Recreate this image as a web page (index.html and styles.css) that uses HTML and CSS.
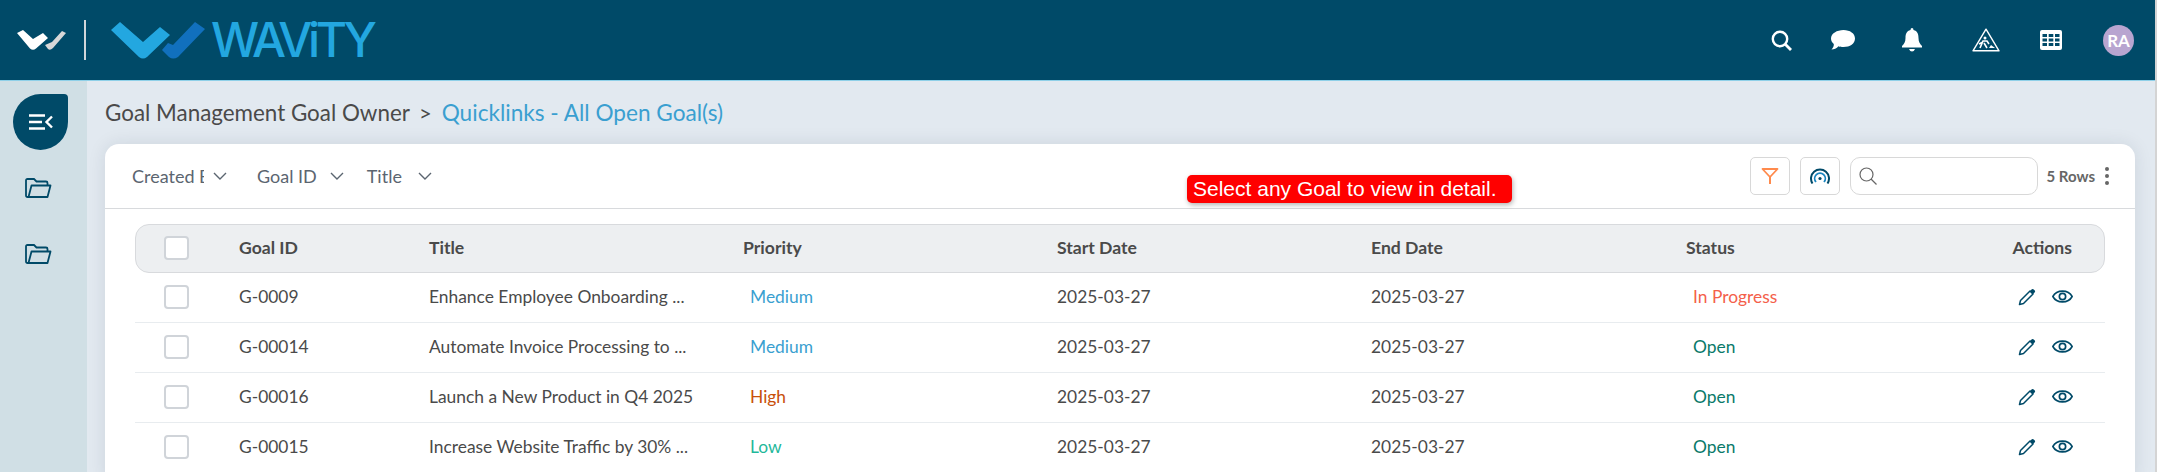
FILE: index.html
```html
<!DOCTYPE html>
<html>

<head>
    <title>Wavity - Goals</title>
    <link rel="stylesheet" href="styles.css">
</head>

<body>
    <svg class="sprite">
        <symbol id="pencil" viewBox="0 0 18 18">
            <path d="M1.5 16.5 L2.5 12.5 L12 3 L15 6 L5.5 15.5 Z" fill="none" stroke="#004a68" stroke-width="1.5" stroke-linejoin="round" />
            <path d="M11.8 3.2 L13.8 1.2 Q14.6 .6 15.4 1.2 L16.8 2.6 Q17.4 3.4 16.8 4.2 L14.8 6.2 Z" fill="#004a68" />
        </symbol>
        <symbol id="eye" viewBox="0 0 20 14">
            <path d="M.8 7 C4.5 .2 15.5 .2 19.2 7 C15.5 13.8 4.5 13.8 .8 7 Z" fill="none" stroke="#004a68" stroke-width="1.5" />
            <circle cx="10" cy="7" r="3" fill="none" stroke="#004a68" stroke-width="1.6" />
        </symbol>
        <symbol id="folder" viewBox="0 0 27 20">
            <path d="M4 19 H2.5 Q1 19 1 17.5 V2.5 Q1 1 2.5 1 H9 L11.5 3.5 H21 Q22.5 3.5 22.5 5 V7" fill="none" stroke="#004a68" stroke-width="1.8" />
            <path d="M6.5 7.5 H25.5 L22.5 19 H3.5 Z" fill="none" stroke="#004a68" stroke-width="1.8" stroke-linejoin="round" />
        </symbol>
        <symbol id="chevron" viewBox="0 0 14 8">
            <path d="M1 1 L7 7 L13 1" fill="none" stroke="#5b6570" stroke-width="1.4" />
        </symbol>
    </svg>

    <div class="app">
        <header class="topbar">
            <svg class="logo-small" viewBox="0 0 50 20">
                <path d="M0 3 L6 0 L16 9 L26 3 L31 8 L19 18.5 Q16 21 13 18.5 Z" fill="#fff" />
                <path d="M28 15 L35 12 L45 1 L49 3 L36 18 Q33 21 31 19 Z" fill="#d8d8d8" />
            </svg>
            <div class="logo-divider"></div>
            <svg class="logo-big" viewBox="0 0 94 37">
                <path d="M0 8 L9 0 L32 20 L49 5 L59 13 L36 35 Q32 38 28 35 Z" fill="#23a7e0" />
                <path d="M51 28 L57 21 L62 23 L84 0 L94 7 L67 35 Q62 38 58 35 Z" fill="#1170bd" />
            </svg>
            <span class="wordmark">WAViTY</span>

            <div class="topbar-icons">
                <svg class="ti ti-search" viewBox="0 0 21 21">
                    <circle cx="9" cy="9" r="7.2" fill="none" stroke="#fff" stroke-width="2.4" />
                    <path d="M14 14 L20 20" stroke="#fff" stroke-width="2.8" />
                </svg>
                <svg class="ti ti-chat" viewBox="0 0 24 20">
                    <path d="M12.5 0 C19 0 24 3.5 24 8.5 C24 13.5 19 17 12.5 17 C10.5 17 9 16.8 7.5 16.2 C5.5 18.5 3 19.5 .5 19.5 C2 18 3 16 2.8 14 C1 12.5 0 10.5 0 8.5 C0 3.5 6 0 12.5 0 Z" fill="#fff" />
                </svg>
                <svg class="ti ti-bell" viewBox="0 0 20 24">
                    <path d="M10 0 Q11.5 0 11.5 2 C15.5 3 16.5 6 16.5 10 C16.5 14 18 16 20 18 V19.5 H0 V18 C2 16 3.5 14 3.5 10 C3.5 6 4.5 3 8.5 2 Q8.5 0 10 0 Z" fill="#fff" />
                    <path d="M7 21 H13 Q12 23.5 10 23.5 Q8 23.5 7 21 Z" fill="#fff" />
                </svg>
                <svg class="ti ti-work" viewBox="0 0 28 24">
                    <path d="M14 1.2 L27 22.8 H1 Z" fill="none" stroke="#fff" stroke-width="1.4" stroke-linejoin="round" />
                    <circle cx="13" cy="10" r="1.5" fill="#fff" />
                    <path d="M8 20 L11 13 L15 13 L17 16 M12 15 L15 20 M7 16 L11 14" fill="none" stroke="#fff" stroke-width="1.6" />
                    <path d="M17 20 L19 17 L23 20 Z" fill="#fff" />
                </svg>
                <svg class="ti ti-grid" viewBox="0 0 22 20">
                    <rect width="22" height="20" rx="2" fill="#fff" />
                    <g fill="#004a68">
                        <rect x="2.5" y="4" width="4.5" height="3" /><rect x="8.7" y="4" width="4.6" height="3" /><rect x="15" y="4" width="4.5" height="3" />
                        <rect x="2.5" y="8.5" width="4.5" height="3" /><rect x="8.7" y="8.5" width="4.6" height="3" /><rect x="15" y="8.5" width="4.5" height="3" />
                        <rect x="2.5" y="13" width="4.5" height="3" /><rect x="8.7" y="13" width="4.6" height="3" /><rect x="15" y="13" width="4.5" height="3" />
                    </g>
                </svg>
                <div class="avatar">RA</div>
            </div>
        </header>

        <div class="below">
            <aside class="sidebar">
                <div class="menu-btn">
                    <svg viewBox="0 0 24 16">
                        <path d="M0 1.5 H16 M0 8 H13 M0 14.5 H16" stroke="#fff" stroke-width="2.4" />
                        <path d="M23 2.5 L17.5 8 L23 13.5" fill="none" stroke="#fff" stroke-width="2.4" />
                    </svg>
                </div>
                <svg class="side-folder"><use href="#folder" /></svg>
                <svg class="side-folder"><use href="#folder" /></svg>
            </aside>

            <main class="content">
                <div class="crumbs">
                    <span>Goal Management Goal Owner</span>
                    <span class="crumb-sep">&gt;</span>
                    <span class="crumb-link">Quicklinks - All Open Goal(s)</span>
                </div>

                <section class="card">
                    <div class="toolbar">
                        <div class="filter filter-created">
                            <span class="filter-label">Created By</span>
                            <svg class="chev"><use href="#chevron" /></svg>
                        </div>
                        <div class="filter filter-goal">
                            <span>Goal ID</span>
                            <svg class="chev"><use href="#chevron" /></svg>
                        </div>
                        <div class="filter filter-title">
                            <span>Title</span>
                            <svg class="chev"><use href="#chevron" /></svg>
                        </div>

                        <div class="tools">
                            <div class="tool-btn">
                                <svg viewBox="0 0 18 18" width="18" height="18">
                                    <path d="M1.5 2 H16.5 L9 10 Z" fill="none" stroke="#ff8a4c" stroke-width="1.8" stroke-linejoin="round" />
                                    <path d="M9 10 V17" stroke="#ff8a4c" stroke-width="2" />
                                </svg>
                            </div>
                            <div class="tool-btn">
                                <svg viewBox="0 0 20 16" width="20" height="16">
                                    <path d="M2.5 15.5 A9 9 0 1 1 17.5 15.5" fill="none" stroke="#004a68" stroke-width="2" />
                                    <path d="M6 14 A5.3 5.3 0 1 1 14 14" fill="none" stroke="#1a86c0" stroke-width="1.8" />
                                    <circle cx="10" cy="10.5" r="1.6" fill="#004a68" />
                                </svg>
                            </div>
                            <div class="search-box">
                                <svg viewBox="0 0 18 18" width="18" height="18">
                                    <circle cx="7.5" cy="7.5" r="6.5" fill="none" stroke="#666" stroke-width="1.2" />
                                    <path d="M12 12 L17.5 17.5" stroke="#666" stroke-width="1.2" />
                                </svg>
                            </div>
                            <span class="rows-count">5 Rows</span>
                            <div class="dots"><i></i><i></i><i></i></div>
                        </div>
                    </div>

                    <div class="toast">Select any Goal to view in detail.</div>

                    <div class="table">
                        <div class="row row-head">
                            <div><span class="check"></span></div>
                            <div>Goal ID</div>
                            <div>Title</div>
                            <div>Priority</div>
                            <div>Start Date</div>
                            <div>End Date</div>
                            <div>Status</div>
                            <div class="cell-actions">Actions</div>
                        </div>

                        <div class="row">
                            <div><span class="check"></span></div>
                            <div>G-0009</div>
                            <div>Enhance Employee Onboarding ...</div>
                            <div class="tag medium">Medium</div>
                            <div>2025-03-27</div>
                            <div>2025-03-27</div>
                            <div class="tag progress">In Progress</div>
                            <div class="cell-actions"><svg class="act-edit"><use href="#pencil" /></svg><svg class="act-view"><use href="#eye" /></svg></div>
                        </div>

                        <div class="row">
                            <div><span class="check"></span></div>
                            <div>G-00014</div>
                            <div>Automate Invoice Processing to ...</div>
                            <div class="tag medium">Medium</div>
                            <div>2025-03-27</div>
                            <div>2025-03-27</div>
                            <div class="tag open">Open</div>
                            <div class="cell-actions"><svg class="act-edit"><use href="#pencil" /></svg><svg class="act-view"><use href="#eye" /></svg></div>
                        </div>

                        <div class="row">
                            <div><span class="check"></span></div>
                            <div>G-00016</div>
                            <div>Launch a New Product in Q4 2025</div>
                            <div class="tag high">High</div>
                            <div>2025-03-27</div>
                            <div>2025-03-27</div>
                            <div class="tag open">Open</div>
                            <div class="cell-actions"><svg class="act-edit"><use href="#pencil" /></svg><svg class="act-view"><use href="#eye" /></svg></div>
                        </div>

                        <div class="row">
                            <div><span class="check"></span></div>
                            <div>G-00015</div>
                            <div>Increase Website Traffic by 30% ...</div>
                            <div class="tag low">Low</div>
                            <div>2025-03-27</div>
                            <div>2025-03-27</div>
                            <div class="tag open">Open</div>
                            <div class="cell-actions"><svg class="act-edit"><use href="#pencil" /></svg><svg class="act-view"><use href="#eye" /></svg></div>
                        </div>
                    </div>
                </section>
            </main>
        </div>
    </div>
</body>

</html>
```

FILE: styles.css
```css
* {
    box-sizing: border-box;
}

html,
body {
    margin: 0;
    height: 472px;
    overflow: hidden;
}

body {
    display: flex;
    flex-direction: column;
    background: #d4d4d4;
    font-family: Lato, "Liberation Sans", sans-serif;
    color: #4a4a4a;
}

.sprite {
    display: none;
}

.app {
    width: 2155px;
    height: 472px;
    display: flex;
    flex-direction: column;
    overflow: hidden;
}

/* top bar */
.topbar {
    flex: 0 0 81px;
    display: flex;
    align-items: center;
    background: #004a68;
    border-bottom: 1px solid #8fd0e8;
}

.logo-small {
    width: 50px;
    height: 20px;
    margin: 0 0 0 17px;
}

.logo-divider {
    width: 2px;
    height: 40px;
    margin-left: 17px;
    background: #d0d6da;
}

.logo-big {
    width: 94px;
    height: 37px;
    margin-left: 25px;
}

.wordmark {
    margin-left: 6px;
    font-family: Inter, sans-serif;
    font-size: 48px;
    font-weight: 500;
    line-height: 48px;
    color: #23a7e0;
    letter-spacing: -4.3px;
}

.topbar-icons {
    margin-left: auto;
    display: flex;
    align-items: center;
}

.ti {
    display: block;
}

.ti-search {
    width: 21px;
    height: 21px;
}

.ti-chat {
    width: 24px;
    height: 20px;
    margin-left: 39px;
}

.ti-bell {
    width: 20px;
    height: 24px;
    margin-left: 47px;
}

.ti-work {
    width: 28px;
    height: 24px;
    margin-left: 50px;
}

.ti-grid {
    width: 22px;
    height: 20px;
    margin-left: 40px;
}

.avatar {
    width: 31px;
    height: 31px;
    margin: 0 21px 0 41px;
    border-radius: 50%;
    background: #b8a5d0;
    color: #fff;
    font-size: 17px;
    font-weight: 700;
    line-height: 31px;
    text-align: center;
}

/* sidebar and content */
.below {
    flex: 1;
    display: flex;
    min-height: 0;
}

.sidebar {
    flex: 0 0 87px;
    display: flex;
    flex-direction: column;
    align-items: flex-start;
    padding: 13px 0 0 13px;
    background: #d0dfe5;
}

.menu-btn {
    width: 55px;
    height: 56px;
    display: flex;
    align-items: center;
    justify-content: center;
    background: #004a68;
    border-radius: 50% 4px 50% 50%;
}

.menu-btn svg {
    width: 24px;
    height: 16px;
}

.side-folder {
    width: 27px;
    height: 20px;
    margin-left: 12px;
    margin-top: 28px;
}

.side-folder + .side-folder {
    margin-top: 46px;
}

.content {
    flex: 1;
    min-width: 0;
    padding: 0 20px 0 18px;
    background: #e2e9f0;
}

.crumbs {
    height: 63px;
    display: flex;
    align-items: center;
    font-size: 22.4px;
    padding-bottom: 1px;
}

.crumb-sep {
    margin: 0 10px 0 9px;
    font-size: 22px;
}

.crumb-link {
    color: #3a9fd0;
    font-size: 22.6px;
}

.card {
    position: relative;
    height: 340px;
    background: #fff;
    border-radius: 14px 14px 0 0;
    box-shadow: 0 0 18px rgba(0, 40, 60, 0.1);
}

/* filters and tools */
.toolbar {
    height: 65px;
    display: flex;
    align-items: center;
    padding-left: 27px;
    border-bottom: 1px solid #d8dadd;
    font-size: 18px;
    color: #5b6570;
}

.filter {
    display: flex;
    align-items: center;
}

.filter-label {
    width: 72px;
    overflow: hidden;
    white-space: nowrap;
}

.filter-goal {
    margin-left: 30px;
}

.filter-title {
    margin-left: 23px;
}

.chev {
    width: 14px;
    height: 8px;
    margin-left: 13px;
}

.filter-created .chev {
    margin-left: 9px;
}

.filter-title .chev {
    margin-left: 16px;
}

.tools {
    margin-left: auto;
    display: flex;
    align-items: center;
    padding-right: 26px;
}

.tool-btn {
    width: 40px;
    height: 38px;
    margin-right: 10px;
    display: flex;
    align-items: center;
    justify-content: center;
    border: 1px solid #d8d8d8;
    border-radius: 5px;
}

.search-box {
    width: 188px;
    height: 38px;
    display: flex;
    align-items: center;
    padding-left: 8px;
    border: 1px solid #d8d8d8;
    border-radius: 10px;
}

.rows-count {
    margin-left: 8px;
    font-size: 15px;
    font-weight: 700;
    color: #666;
}

.dots {
    margin-left: 10px;
    display: flex;
    flex-direction: column;
    gap: 3px;
}

.dots i {
    width: 4px;
    height: 4px;
    border-radius: 50%;
    background: #666;
}

.toast {
    position: absolute;
    left: 1082px;
    top: 31px;
    width: 325px;
    height: 28px;
    padding-left: 6px;
    background: #f00;
    border-radius: 5px;
    box-shadow: 1px 2px 5px rgba(0, 0, 0, 0.3);
    color: #fff;
    font-family: "Liberation Sans", sans-serif;
    font-size: 21px;
    line-height: 27px;
}

/* table */
.table {
    margin: 15px 30px 0;
}

.row {
    height: 50px;
    display: grid;
    grid-template-columns: 75px 190px 314px 314px 314px 315px 1fr 200px;
    align-items: center;
    padding: 0 0 2px 29px;
    border-bottom: 1px solid #e8ecef;
    font-size: 17.4px;
    white-space: nowrap;
}

.row-head {
    height: 49px;
    border: 1px solid #d8dadd;
    border-radius: 14px;
    background: #edeff1;
    font-size: 17.6px;
    font-weight: 700;
    padding: 0 0 2px 28px;
}

.check {
    display: block;
    width: 25px;
    height: 24px;
    border: 2px solid #d0d4d9;
    border-radius: 4px;
    background: #fff;
}

.tag {
    padding-left: 7px;
}

.medium {
    color: #3a9fd0;
}

.high {
    color: #c8500a;
}

.low {
    color: #1fb89a;
}

.progress {
    color: #f4604a;
}

.open {
    color: #0a7a6a;
}

.cell-actions {
    grid-column: 8;
    display: flex;
    align-items: center;
    justify-content: flex-end;
    padding-right: 32px;
}

.act-edit {
    width: 18px;
    height: 18px;
}

.act-view {
    width: 21px;
    height: 15px;
    margin-left: 16px;
}
```
